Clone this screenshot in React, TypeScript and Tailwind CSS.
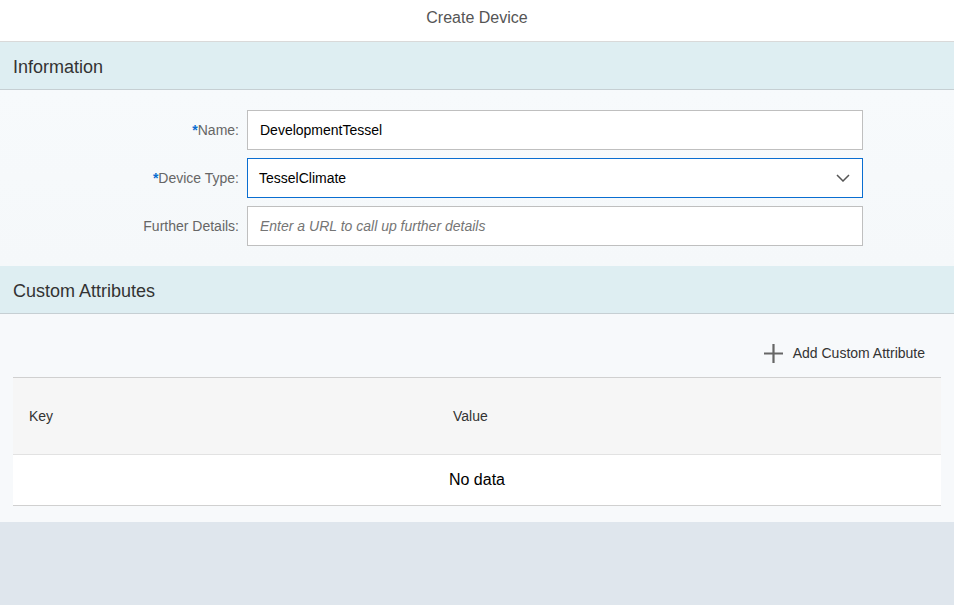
const Field = ({
  label,
  required,
  children,
}: {
  label: string
  required?: boolean
  children: React.ReactNode
}) => (
  <div className="flex items-center h-10">
    <div className="w-[247px] pr-2 text-right text-[14px] text-[#666]">
      {required && <span className="text-[#0a6ed1] font-bold">*</span>}
      {label}:
    </div>
    <div className="w-[616px]">{children}</div>
  </div>
)

const SectionHeader = ({ title }: { title: string }) => (
  <div className="h-12 flex items-center px-[13px] pt-1 bg-[#deeef2] border-b border-[#c6cfd3] text-[18px] text-[#333]">
    {title}
  </div>
)

const App = () => {
  return (
    <div className="w-[954px] h-[605px] flex flex-col bg-[#dfe6ed] font-['Liberation_Sans',Arial,sans-serif]">
      <div className="h-[42px] shrink-0 flex items-center justify-center pb-[6px] bg-white border-b border-[#d9d9d9] text-[16px] text-[#555]">
        Create Device
      </div>

      <SectionHeader title="Information" />
      <div className="h-[176px] flex flex-col gap-2 pt-5 bg-gradient-to-b from-[#f7fafc] to-[#f5f8fa]">
        <Field label="Name" required>
          <div className="h-10 flex items-center px-3 bg-white border border-[#bfbfbf] text-[14px] text-black">
            DevelopmentTessel
          </div>
        </Field>
        <Field label="Device Type" required>
          <div className="h-10 flex items-center justify-between pl-[11px] pr-3 bg-white border border-[#0a6ed1] text-[14px] text-black">
            TesselClimate
            <svg width="14" height="8" viewBox="0 0 14 8" fill="none">
              <path d="M1 1l6 6 6-6" stroke="#555" strokeWidth="1.5" />
            </svg>
          </div>
        </Field>
        <Field label="Further Details">
          <div className="h-10 flex items-center px-3 bg-white border border-[#bfbfbf] text-[14px] italic text-[#757575]">
            Enter a URL to call up further details
          </div>
        </Field>
      </div>

      <SectionHeader title="Custom Attributes" />
      <div className="h-[208px] bg-[#f7f9fb] px-[13px]">
        <div className="h-[63px] flex items-center justify-end pr-4 pt-4 gap-[10px]">
          <svg width="19" height="19" viewBox="0 0 19 19">
            <path d="M9.5 0v19M0 9.5h19" stroke="#666" strokeWidth="2.2" />
          </svg>
          <span className="text-[14px] text-[#333]">Add Custom Attribute</span>
        </div>
        <div className="border-t border-[#d0d0d0]">
          <div className="h-[77px] flex items-center bg-[#f6f6f6] border-b border-[#e2e2e2] text-[14px] text-[#333]">
            <div className="w-[424px] pl-4">Key</div>
            <div className="pl-4">Value</div>
          </div>
          <div className="h-[51px] flex items-center justify-center bg-white border-b border-[#d0d0d0] text-[16px] text-black">
            No data
          </div>
        </div>
      </div>
    </div>
  )
}

export default App
